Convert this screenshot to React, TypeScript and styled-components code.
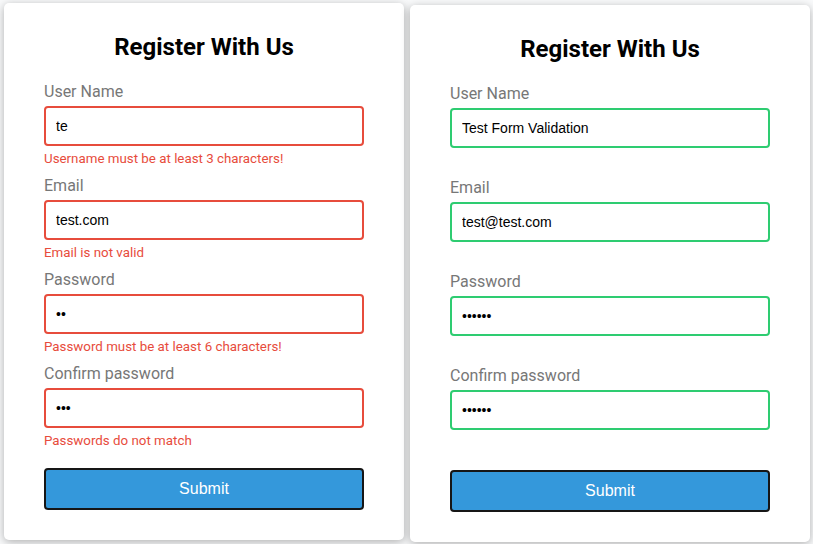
import React from "react";
import styled, { createGlobalStyle } from "styled-components";

const GlobalStyle = createGlobalStyle`
  * { box-sizing: border-box; }
  html, body { margin: 0; padding: 0; }
  body {
    background: #f9fafb;
    font-family: Roboto, "Liberation Sans", Arial, sans-serif;
    width: 813px;
    height: 544px;
    overflow: hidden;
  }
`;

const Page = styled.div`
  display: flex;
  align-items: flex-start;
  gap: 6px;
  padding: 3px 0 0 4px;
`;

const Card = styled.div<{ $offset?: number }>`
  width: 400px;
  margin-top: ${(p) => p.$offset ?? 0}px;
  background: #fff;
  border-radius: 5px;
  box-shadow: 0 2px 10px rgba(0, 0, 0, 0.3);
`;

const Form = styled.form`
  padding: 30px 40px;
`;

const Title = styled.h2`
  margin: 0 0 20px;
  text-align: center;
  font-family: Roboto, sans-serif;
  font-size: 24px;
  font-weight: 700;
  line-height: 29px;
  color: #000;
`;

const Field = styled.div`
  margin-bottom: 10px;
`;

const Label = styled.label`
  display: block;
  color: #777;
  font-size: 16px;
  line-height: 19px;
  margin-bottom: 5px;
`;

const Input = styled.input<{ $state: "error" | "success" }>`
  display: block;
  width: 100%;
  padding: 10px;
  font-family: Arial, "Liberation Sans", sans-serif;
  font-size: 14px;
  line-height: 16px;
  color: #000;
  background: #fff;
  border: 2px solid ${(p) => (p.$state === "error" ? "#e74c3c" : "#2ecc71")};
  border-radius: 4px;
  outline: none;
`;

const Message = styled.small<{ $show: boolean }>`
  display: block;
  height: 20px;
  padding-top: 5px;
  font-size: 13.33px;
  line-height: 15px;
  color: #e74c3c;
  visibility: ${(p) => (p.$show ? "visible" : "hidden")};
`;

const Submit = styled.button`
  display: block;
  width: 100%;
  margin-top: 20px;
  padding: 10px;
  font-family: Arial, "Liberation Sans", sans-serif;
  font-size: 16px;
  line-height: 18px;
  color: #fff;
  background: #3498db;
  border: 2px solid #161616;
  border-radius: 4px;
  cursor: pointer;
`;

type FieldData = {
  label: string;
  type: string;
  value: string;
  error?: string;
};

const invalid: FieldData[] = [
  { label: "User Name", type: "text", value: "te", error: "Username must be at least 3 characters!" },
  { label: "Email", type: "text", value: "test.com", error: "Email is not valid" },
  { label: "Password", type: "password", value: "ab", error: "Password must be at least 6 characters!" },
  { label: "Confirm password", type: "password", value: "abc", error: "Passwords do not match" },
];

const valid: FieldData[] = [
  { label: "User Name", type: "text", value: "Test Form Validation" },
  { label: "Email", type: "text", value: "test@test.com" },
  { label: "Password", type: "password", value: "abcdef" },
  { label: "Confirm password", type: "password", value: "abcdef" },
];

function RegisterCard({ fields, offset }: { fields: FieldData[]; offset?: number }) {
  return (
    <Card $offset={offset}>
      <Form onSubmit={(e) => e.preventDefault()}>
        <Title>Register With Us</Title>
        {fields.map((f) => (
          <Field key={f.label}>
            <Label>{f.label}</Label>
            <Input
              type={f.type}
              value={f.value}
              readOnly
              $state={f.error ? "error" : "success"}
            />
            <Message $show={!!f.error}>{f.error ?? "Error message"}</Message>
          </Field>
        ))}
        <Submit type="submit">Submit</Submit>
      </Form>
    </Card>
  );
}

export default function App() {
  return (
    <>
      <GlobalStyle />
      <Page>
        <RegisterCard fields={invalid} />
        <RegisterCard fields={valid} offset={2} />
      </Page>
    </>
  );
}
